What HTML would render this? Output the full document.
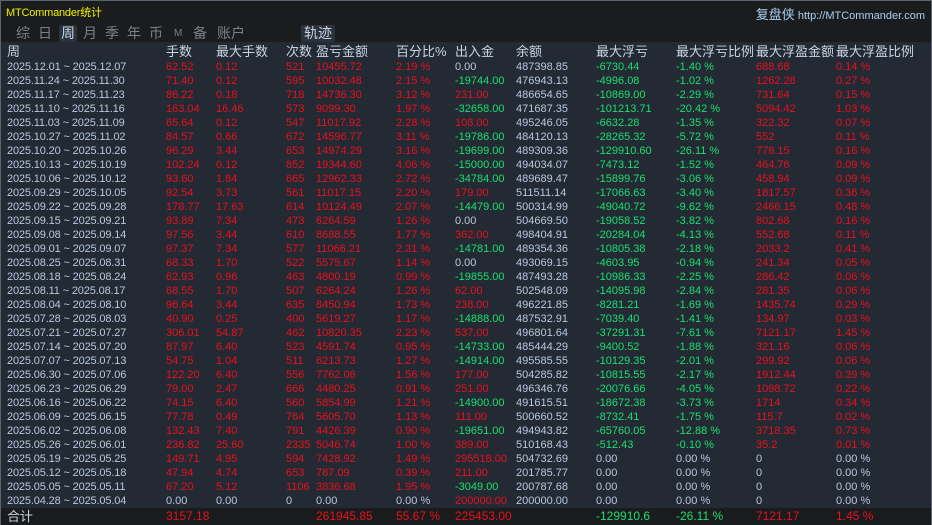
<!DOCTYPE html>
<html><head><meta charset="utf-8"><style>
*{margin:0;padding:0;box-sizing:border-box}
body{width:932px;height:525px;overflow:hidden;background:#1b1c1e;font-family:"Liberation Sans","Noto Sans CJK SC",sans-serif;position:relative}
.frame{position:absolute;left:0;top:0;width:932px;height:525px;border:1px solid #5c6470;border-bottom:none}
.title{position:absolute;left:6px;top:4px;font-size:11px;color:#f0f000;letter-spacing:-0.2px}
.site{position:absolute;right:7px;top:4px;font-size:11px;color:#a8d0f0}
.site b{font-weight:normal;font-size:13px}
.tabs{position:absolute;left:12px;top:25px;font-size:14px;color:#7a828c;height:17px;line-height:17px}
.tabs span{position:absolute;top:0;white-space:nowrap}
.sel{background:#2a323c;color:#c8d4e4;padding:0 2px;border-radius:2px}
.tbl{position:absolute;left:1px;top:42px;width:930px;height:466px;background:#232a33}
.hd,.row,.tot{position:absolute;left:0;width:930px;font-size:11px;white-space:nowrap}
.hd{top:2px;height:16px;line-height:16px;font-size:13px;color:#c8d4e4}
.row{height:14px;line-height:14px;color:#b8c8e0}
.tot{top:508px;left:1px;height:17px;line-height:17px;background:#1a1b1c;font-size:12px}
span{position:absolute;top:0}
.c1{left:6px;letter-spacing:-0.15px}.c2{left:165px}.c3{left:215px}.c4{left:285px}.c5{left:315px}.c6{left:395px}.c7{left:454px}.c8{left:515px}.c9{left:595px}.c10{left:675px}.c11{left:755px}.c12{left:835px}
.r{color:#e8101c}.g{color:#18e070}
.tot .c1{color:#c8d4e4;font-size:13px}
</style></head><body>
<div class="frame"></div>
<div class="title">MTCommander统计</div>
<div class="site"><b>复盘侠</b> http://MTCommander.com</div>
<div class="tabs">
<span style="left:4px">综</span><span style="left:26px">日</span><span class="sel" style="left:47px">周</span><span style="left:71px">月</span><span style="left:93px">季</span><span style="left:115px">年</span><span style="left:137px">币</span><span style="left:162px;font-size:10px">M</span><span style="left:181px">备</span><span style="left:205px">账户</span><span class="sel" style="left:289px;padding:0 3px">轨迹</span>
</div>
<div class="tbl">
<div class="hd"><span class="c1">周</span><span class="c2">手数</span><span class="c3">最大手数</span><span class="c4">次数</span><span class="c5">盈亏金额</span><span class="c6">百分比%</span><span class="c7">出入金</span><span class="c8">余额</span><span class="c9">最大浮亏</span><span class="c10">最大浮亏比例</span><span class="c11">最大浮盈金额</span><span class="c12">最大浮盈比例</span></div>
</div>
<div class="tot"><span class="c1">合计</span><span class="c2 r">3157.18</span><span class="c5 r">261945.85</span><span class="c6 r">55.67 %</span><span class="c7 r">225453.00</span><span class="c9 g">-129910.6</span><span class="c10 g">-26.11 %</span><span class="c11 r">7121.17</span><span class="c12 r">1.45 %</span></div>
<div class="tbl" style="background:none">
<div class="row" style="top:18px"><span class="c1">2025.12.01 ~ 2025.12.07</span><span class="c2 r">62.52</span><span class="c3 r">0.12</span><span class="c4 r">521</span><span class="c5 r">10455.72</span><span class="c6 r">2.19 %</span><span class="c7">0.00</span><span class="c8">487398.85</span><span class="c9 g">-6730.44</span><span class="c10 g">-1.40 %</span><span class="c11 r">688.68</span><span class="c12 r">0.14 %</span></div>
<div class="row" style="top:32px"><span class="c1">2025.11.24 ~ 2025.11.30</span><span class="c2 r">71.40</span><span class="c3 r">0.12</span><span class="c4 r">595</span><span class="c5 r">10032.48</span><span class="c6 r">2.15 %</span><span class="c7 g">-19744.00</span><span class="c8">476943.13</span><span class="c9 g">-4996.08</span><span class="c10 g">-1.02 %</span><span class="c11 r">1262.28</span><span class="c12 r">0.27 %</span></div>
<div class="row" style="top:46px"><span class="c1">2025.11.17 ~ 2025.11.23</span><span class="c2 r">86.22</span><span class="c3 r">0.18</span><span class="c4 r">718</span><span class="c5 r">14736.30</span><span class="c6 r">3.12 %</span><span class="c7 r">231.00</span><span class="c8">486654.65</span><span class="c9 g">-10869.00</span><span class="c10 g">-2.29 %</span><span class="c11 r">731.64</span><span class="c12 r">0.15 %</span></div>
<div class="row" style="top:60px"><span class="c1">2025.11.10 ~ 2025.11.16</span><span class="c2 r">163.04</span><span class="c3 r">16.46</span><span class="c4 r">573</span><span class="c5 r">9099.30</span><span class="c6 r">1.97 %</span><span class="c7 g">-32658.00</span><span class="c8">471687.35</span><span class="c9 g">-101213.71</span><span class="c10 g">-20.42 %</span><span class="c11 r">5094.42</span><span class="c12 r">1.03 %</span></div>
<div class="row" style="top:74px"><span class="c1">2025.11.03 ~ 2025.11.09</span><span class="c2 r">65.64</span><span class="c3 r">0.12</span><span class="c4 r">547</span><span class="c5 r">11017.92</span><span class="c6 r">2.28 %</span><span class="c7 r">108.00</span><span class="c8">495246.05</span><span class="c9 g">-6632.28</span><span class="c10 g">-1.35 %</span><span class="c11 r">322.32</span><span class="c12 r">0.07 %</span></div>
<div class="row" style="top:88px"><span class="c1">2025.10.27 ~ 2025.11.02</span><span class="c2 r">84.57</span><span class="c3 r">0.66</span><span class="c4 r">672</span><span class="c5 r">14596.77</span><span class="c6 r">3.11 %</span><span class="c7 g">-19786.00</span><span class="c8">484120.13</span><span class="c9 g">-28265.32</span><span class="c10 g">-5.72 %</span><span class="c11 r">552</span><span class="c12 r">0.11 %</span></div>
<div class="row" style="top:102px"><span class="c1">2025.10.20 ~ 2025.10.26</span><span class="c2 r">96.29</span><span class="c3 r">3.44</span><span class="c4 r">653</span><span class="c5 r">14974.29</span><span class="c6 r">3.16 %</span><span class="c7 g">-19699.00</span><span class="c8">489309.36</span><span class="c9 g">-129910.60</span><span class="c10 g">-26.11 %</span><span class="c11 r">778.15</span><span class="c12 r">0.16 %</span></div>
<div class="row" style="top:116px"><span class="c1">2025.10.13 ~ 2025.10.19</span><span class="c2 r">102.24</span><span class="c3 r">0.12</span><span class="c4 r">852</span><span class="c5 r">19344.60</span><span class="c6 r">4.06 %</span><span class="c7 g">-15000.00</span><span class="c8">494034.07</span><span class="c9 g">-7473.12</span><span class="c10 g">-1.52 %</span><span class="c11 r">464.76</span><span class="c12 r">0.09 %</span></div>
<div class="row" style="top:130px"><span class="c1">2025.10.06 ~ 2025.10.12</span><span class="c2 r">93.60</span><span class="c3 r">1.84</span><span class="c4 r">665</span><span class="c5 r">12962.33</span><span class="c6 r">2.72 %</span><span class="c7 g">-34784.00</span><span class="c8">489689.47</span><span class="c9 g">-15899.76</span><span class="c10 g">-3.06 %</span><span class="c11 r">458.94</span><span class="c12 r">0.09 %</span></div>
<div class="row" style="top:144px"><span class="c1">2025.09.29 ~ 2025.10.05</span><span class="c2 r">92.54</span><span class="c3 r">3.73</span><span class="c4 r">561</span><span class="c5 r">11017.15</span><span class="c6 r">2.20 %</span><span class="c7 r">179.00</span><span class="c8">511511.14</span><span class="c9 g">-17066.63</span><span class="c10 g">-3.40 %</span><span class="c11 r">1817.57</span><span class="c12 r">0.36 %</span></div>
<div class="row" style="top:158px"><span class="c1">2025.09.22 ~ 2025.09.28</span><span class="c2 r">178.77</span><span class="c3 r">17.63</span><span class="c4 r">614</span><span class="c5 r">10124.49</span><span class="c6 r">2.07 %</span><span class="c7 g">-14479.00</span><span class="c8">500314.99</span><span class="c9 g">-49040.72</span><span class="c10 g">-9.62 %</span><span class="c11 r">2466.15</span><span class="c12 r">0.48 %</span></div>
<div class="row" style="top:172px"><span class="c1">2025.09.15 ~ 2025.09.21</span><span class="c2 r">93.89</span><span class="c3 r">7.34</span><span class="c4 r">473</span><span class="c5 r">6264.59</span><span class="c6 r">1.26 %</span><span class="c7">0.00</span><span class="c8">504669.50</span><span class="c9 g">-19058.52</span><span class="c10 g">-3.82 %</span><span class="c11 r">802.68</span><span class="c12 r">0.16 %</span></div>
<div class="row" style="top:186px"><span class="c1">2025.09.08 ~ 2025.09.14</span><span class="c2 r">97.56</span><span class="c3 r">3.44</span><span class="c4 r">610</span><span class="c5 r">8688.55</span><span class="c6 r">1.77 %</span><span class="c7 r">362.00</span><span class="c8">498404.91</span><span class="c9 g">-20284.04</span><span class="c10 g">-4.13 %</span><span class="c11 r">552.68</span><span class="c12 r">0.11 %</span></div>
<div class="row" style="top:200px"><span class="c1">2025.09.01 ~ 2025.09.07</span><span class="c2 r">97.37</span><span class="c3 r">7.34</span><span class="c4 r">577</span><span class="c5 r">11066.21</span><span class="c6 r">2.31 %</span><span class="c7 g">-14781.00</span><span class="c8">489354.36</span><span class="c9 g">-10805.38</span><span class="c10 g">-2.18 %</span><span class="c11 r">2033.2</span><span class="c12 r">0.41 %</span></div>
<div class="row" style="top:214px"><span class="c1">2025.08.25 ~ 2025.08.31</span><span class="c2 r">68.33</span><span class="c3 r">1.70</span><span class="c4 r">522</span><span class="c5 r">5575.67</span><span class="c6 r">1.14 %</span><span class="c7">0.00</span><span class="c8">493069.15</span><span class="c9 g">-4603.95</span><span class="c10 g">-0.94 %</span><span class="c11 r">241.34</span><span class="c12 r">0.05 %</span></div>
<div class="row" style="top:228px"><span class="c1">2025.08.18 ~ 2025.08.24</span><span class="c2 r">62.93</span><span class="c3 r">0.96</span><span class="c4 r">463</span><span class="c5 r">4800.19</span><span class="c6 r">0.99 %</span><span class="c7 g">-19855.00</span><span class="c8">487493.28</span><span class="c9 g">-10986.33</span><span class="c10 g">-2.25 %</span><span class="c11 r">286.42</span><span class="c12 r">0.06 %</span></div>
<div class="row" style="top:242px"><span class="c1">2025.08.11 ~ 2025.08.17</span><span class="c2 r">68.55</span><span class="c3 r">1.70</span><span class="c4 r">507</span><span class="c5 r">6264.24</span><span class="c6 r">1.26 %</span><span class="c7 r">62.00</span><span class="c8">502548.09</span><span class="c9 g">-14095.98</span><span class="c10 g">-2.84 %</span><span class="c11 r">281.35</span><span class="c12 r">0.06 %</span></div>
<div class="row" style="top:256px"><span class="c1">2025.08.04 ~ 2025.08.10</span><span class="c2 r">96.64</span><span class="c3 r">3.44</span><span class="c4 r">635</span><span class="c5 r">8450.94</span><span class="c6 r">1.73 %</span><span class="c7 r">238.00</span><span class="c8">496221.85</span><span class="c9 g">-8281.21</span><span class="c10 g">-1.69 %</span><span class="c11 r">1435.74</span><span class="c12 r">0.29 %</span></div>
<div class="row" style="top:270px"><span class="c1">2025.07.28 ~ 2025.08.03</span><span class="c2 r">40.90</span><span class="c3 r">0.25</span><span class="c4 r">400</span><span class="c5 r">5619.27</span><span class="c6 r">1.17 %</span><span class="c7 g">-14888.00</span><span class="c8">487532.91</span><span class="c9 g">-7039.40</span><span class="c10 g">-1.41 %</span><span class="c11 r">134.97</span><span class="c12 r">0.03 %</span></div>
<div class="row" style="top:284px"><span class="c1">2025.07.21 ~ 2025.07.27</span><span class="c2 r">306.01</span><span class="c3 r">54.87</span><span class="c4 r">462</span><span class="c5 r">10820.35</span><span class="c6 r">2.23 %</span><span class="c7 r">537.00</span><span class="c8">496801.64</span><span class="c9 g">-37291.31</span><span class="c10 g">-7.61 %</span><span class="c11 r">7121.17</span><span class="c12 r">1.45 %</span></div>
<div class="row" style="top:298px"><span class="c1">2025.07.14 ~ 2025.07.20</span><span class="c2 r">87.97</span><span class="c3 r">6.40</span><span class="c4 r">523</span><span class="c5 r">4591.74</span><span class="c6 r">0.95 %</span><span class="c7 g">-14733.00</span><span class="c8">485444.29</span><span class="c9 g">-9400.52</span><span class="c10 g">-1.88 %</span><span class="c11 r">321.16</span><span class="c12 r">0.06 %</span></div>
<div class="row" style="top:312px"><span class="c1">2025.07.07 ~ 2025.07.13</span><span class="c2 r">54.75</span><span class="c3 r">1.04</span><span class="c4 r">511</span><span class="c5 r">6213.73</span><span class="c6 r">1.27 %</span><span class="c7 g">-14914.00</span><span class="c8">495585.55</span><span class="c9 g">-10129.35</span><span class="c10 g">-2.01 %</span><span class="c11 r">299.92</span><span class="c12 r">0.06 %</span></div>
<div class="row" style="top:326px"><span class="c1">2025.06.30 ~ 2025.07.06</span><span class="c2 r">122.20</span><span class="c3 r">6.40</span><span class="c4 r">556</span><span class="c5 r">7762.06</span><span class="c6 r">1.56 %</span><span class="c7 r">177.00</span><span class="c8">504285.82</span><span class="c9 g">-10815.55</span><span class="c10 g">-2.17 %</span><span class="c11 r">1912.44</span><span class="c12 r">0.39 %</span></div>
<div class="row" style="top:340px"><span class="c1">2025.06.23 ~ 2025.06.29</span><span class="c2 r">79.00</span><span class="c3 r">2.47</span><span class="c4 r">666</span><span class="c5 r">4480.25</span><span class="c6 r">0.91 %</span><span class="c7 r">251.00</span><span class="c8">496346.76</span><span class="c9 g">-20076.66</span><span class="c10 g">-4.05 %</span><span class="c11 r">1098.72</span><span class="c12 r">0.22 %</span></div>
<div class="row" style="top:354px"><span class="c1">2025.06.16 ~ 2025.06.22</span><span class="c2 r">74.15</span><span class="c3 r">6.40</span><span class="c4 r">560</span><span class="c5 r">5854.99</span><span class="c6 r">1.21 %</span><span class="c7 g">-14900.00</span><span class="c8">491615.51</span><span class="c9 g">-18672.38</span><span class="c10 g">-3.73 %</span><span class="c11 r">1714</span><span class="c12 r">0.34 %</span></div>
<div class="row" style="top:368px"><span class="c1">2025.06.09 ~ 2025.06.15</span><span class="c2 r">77.78</span><span class="c3 r">0.49</span><span class="c4 r">764</span><span class="c5 r">5605.70</span><span class="c6 r">1.13 %</span><span class="c7 r">111.00</span><span class="c8">500660.52</span><span class="c9 g">-8732.41</span><span class="c10 g">-1.75 %</span><span class="c11 r">115.7</span><span class="c12 r">0.02 %</span></div>
<div class="row" style="top:382px"><span class="c1">2025.06.02 ~ 2025.06.08</span><span class="c2 r">132.43</span><span class="c3 r">7.40</span><span class="c4 r">791</span><span class="c5 r">4426.39</span><span class="c6 r">0.90 %</span><span class="c7 g">-19651.00</span><span class="c8">494943.82</span><span class="c9 g">-65760.05</span><span class="c10 g">-12.88 %</span><span class="c11 r">3718.35</span><span class="c12 r">0.73 %</span></div>
<div class="row" style="top:396px"><span class="c1">2025.05.26 ~ 2025.06.01</span><span class="c2 r">236.82</span><span class="c3 r">25.60</span><span class="c4 r">2335</span><span class="c5 r">5046.74</span><span class="c6 r">1.00 %</span><span class="c7 r">389.00</span><span class="c8">510168.43</span><span class="c9 g">-512.43</span><span class="c10 g">-0.10 %</span><span class="c11 r">35.2</span><span class="c12 r">0.01 %</span></div>
<div class="row" style="top:410px"><span class="c1">2025.05.19 ~ 2025.05.25</span><span class="c2 r">149.71</span><span class="c3 r">4.95</span><span class="c4 r">594</span><span class="c5 r">7428.92</span><span class="c6 r">1.49 %</span><span class="c7 r">295518.00</span><span class="c8">504732.69</span><span class="c9">0.00</span><span class="c10">0.00 %</span><span class="c11">0</span><span class="c12">0.00 %</span></div>
<div class="row" style="top:424px"><span class="c1">2025.05.12 ~ 2025.05.18</span><span class="c2 r">47.94</span><span class="c3 r">4.74</span><span class="c4 r">653</span><span class="c5 r">787.09</span><span class="c6 r">0.39 %</span><span class="c7 r">211.00</span><span class="c8">201785.77</span><span class="c9">0.00</span><span class="c10">0.00 %</span><span class="c11">0</span><span class="c12">0.00 %</span></div>
<div class="row" style="top:438px"><span class="c1">2025.05.05 ~ 2025.05.11</span><span class="c2 r">67.20</span><span class="c3 r">5.12</span><span class="c4 r">1106</span><span class="c5 r">3836.68</span><span class="c6 r">1.95 %</span><span class="c7 g">-3049.00</span><span class="c8">200787.68</span><span class="c9">0.00</span><span class="c10">0.00 %</span><span class="c11">0</span><span class="c12">0.00 %</span></div>
<div class="row" style="top:452px"><span class="c1">2025.04.28 ~ 2025.05.04</span><span class="c2">0.00</span><span class="c3">0.00</span><span class="c4">0</span><span class="c5">0.00</span><span class="c6">0.00 %</span><span class="c7 r">200000.00</span><span class="c8">200000.00</span><span class="c9">0.00</span><span class="c10">0.00 %</span><span class="c11">0</span><span class="c12">0.00 %</span></div>
</div>
</body></html>
